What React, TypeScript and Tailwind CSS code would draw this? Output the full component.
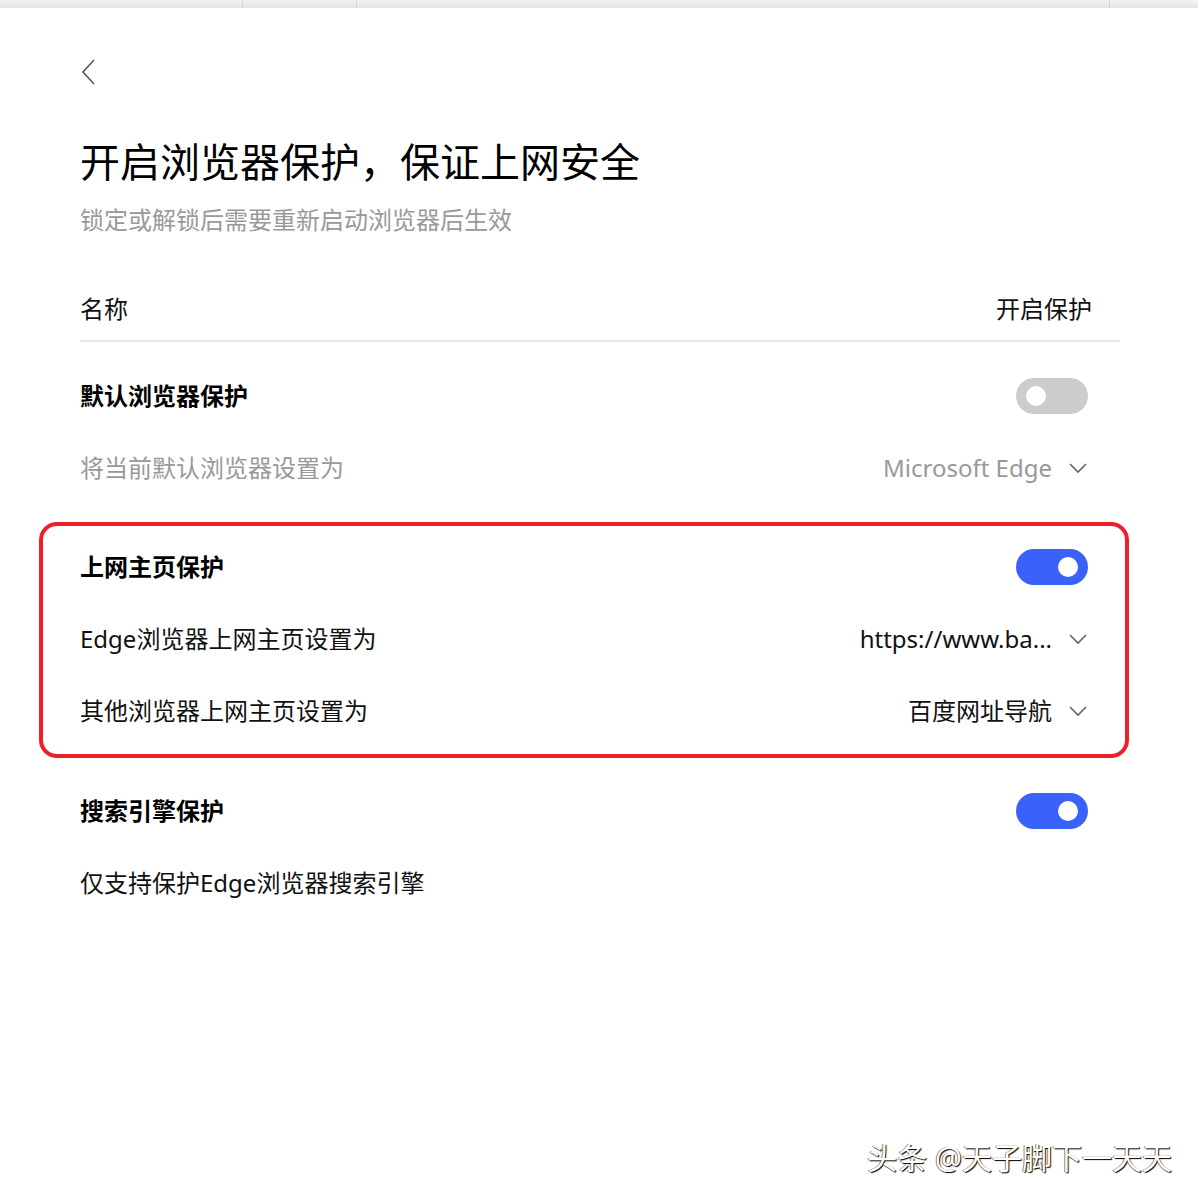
import React from 'react';

const font = 'font-["Noto_Sans","Noto_Sans_CJK_SC",sans-serif]';

const Toggle: React.FC<{ on?: boolean }> = ({ on = false }) => (
    <div
        className={`flex h-[36px] w-[72px] items-center rounded-full ${
            on ? 'justify-end bg-[#3a62fb] pr-[10px]' : 'justify-start bg-[#cccccc] pl-[10px]'
        }`}
    >
        <div className="h-[20px] w-[20px] rounded-full bg-white" />
    </div>
);

const ChevronDown = () => (
    <svg width="20" height="12" viewBox="0 0 20 12" fill="none" className="ml-[16px]">
        <path d="M2 2 L10 10 L18 2" stroke="#666666" strokeWidth="1.6" />
    </svg>
);

const SelectRow: React.FC<{ label: string; value: string; muted?: boolean }> = ({ label, value, muted }) => (
    <div className={`flex h-[72px] items-center justify-between text-[24px] ${muted ? 'text-[#999999]' : 'text-[#111111]'}`}>
        <span>{label}</span>
        <div className="flex items-center">
            <span>{value}</span>
            <ChevronDown />
        </div>
    </div>
);

const TitleRow: React.FC<{ title: string; on?: boolean }> = ({ title, on }) => (
    <div className="flex h-[72px] items-center justify-between">
        <span className="text-[24px] font-bold text-black">{title}</span>
        <Toggle on={on} />
    </div>
);

export default function App() {
    return (
        <div className={`relative h-[1200px] w-[1198px] overflow-hidden bg-white ${font}`}>
            {/* browser tab strip remnant */}
            <div className="flex h-[8px] bg-gradient-to-b from-[#f3f3f3] to-[#e4e4e4]">
                <div className="w-[243px] border-r border-[#d6d6d6]" />
                <div className="w-[114px] border-r border-[#d6d6d6]" />
                <div className="w-[753px] border-r border-[#d6d6d6]" />
                <div className="flex-1" />
            </div>

            <div className="flex w-[1120px] flex-col pl-[80px]">
                <svg width="16" height="26" viewBox="0 0 16 26" fill="none" className="mt-[51px]">
                    <path d="M14 1 L3 13 L14 25" stroke="#555555" strokeWidth="1.6" />
                </svg>

                <h1 className="mt-[49px] text-[40px] leading-[56px] font-normal text-black">
                    开启浏览器保护，保证上网安全
                </h1>
                <p className="mt-[12px] text-[24px] leading-[36px] text-[#999999]">锁定或解锁后需要重新启动浏览器后生效</p>

                <div className="mt-[40px] flex h-[64px] items-center justify-between border-b-2 border-[#e8e8e8] pr-[28px] text-[24px] text-[#111111]">
                    <span>名称</span>
                    <span>开启保护</span>
                </div>

                <div className="mt-[18px] pr-[32px]">
                    <TitleRow title="默认浏览器保护" />
                    <SelectRow label="将当前默认浏览器设置为" value="Microsoft Edge" muted />
                </div>

                <div className="mt-[18px] -ml-[41px] -mr-[9px] rounded-[18px] border-4 border-[#ee1f2a] px-[37px] pt-[5px] pb-[7px]">
                    <TitleRow title="上网主页保护" on />
                    <SelectRow label="Edge浏览器上网主页设置为" value="https://www.ba..." />
                    <SelectRow label="其他浏览器上网主页设置为" value="百度网址导航" />
                </div>

                <div className="mt-[17px] pr-[32px]">
                    <TitleRow title="搜索引擎保护" on />
                    <div className="flex h-[72px] items-center text-[24px] text-[#111111]">仅支持保护Edge浏览器搜索引擎</div>
                </div>
            </div>

            {/* watermark */}
            <div className="absolute right-[26px] bottom-[22px] text-[30px] leading-[40px] text-white [text-shadow:1px_1px_1px_#000,-1px_0_0_#888]">
                头条 @天子脚下一天天
            </div>
        </div>
    );
}
